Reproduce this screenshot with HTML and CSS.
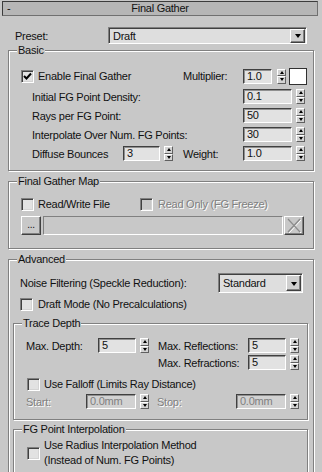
FILE: index.html
```html
<!DOCTYPE html>
<html lang="en">
<head>
    <meta charset="UTF-8">
    <title>Final Gather</title>
    <link rel="stylesheet" href="styles.css">
</head>
<body>

    <div class="rollout">
        <div class="title">
            <span class="minus">-</span>
            <span class="title-text">Final Gather</span>
        </div>

        <div class="row preset-row">
            <span class="preset-lbl">Preset:</span>
            <div class="dropdown preset-dd">
                <span class="dd-text">Draft</span>
                <span class="dd-btn"></span>
            </div>
        </div>

        <!-- Basic -->
        <div class="group basic">
            <span class="legend">Basic</span>
            <div class="row row-enable">
                <span class="check checked"><svg width="9" height="9" viewBox="0 0 9 9"><path d="M1 4 L3.5 6.5 L8 1.5" fill="none" stroke="#000" stroke-width="2"/></svg></span>
                <span class="lbl enable-lbl">Enable Final Gather</span>
                <span class="lbl mult-lbl">Multiplier:</span>
                <span class="field w29">1.0</span>
                <span class="spin"><i class="up"></i><i class="down"></i></span>
                <span class="swatch"></span>
            </div>
            <div class="row row-basic">
                <span class="lbl long-lbl">Initial FG Point Density:</span>
                <span class="field w49">0.1</span>
                <span class="spin"><i class="up"></i><i class="down"></i></span>
            </div>
            <div class="row row-basic">
                <span class="lbl long-lbl">Rays per FG Point:</span>
                <span class="field w49">50</span>
                <span class="spin"><i class="up"></i><i class="down"></i></span>
            </div>
            <div class="row row-basic">
                <span class="lbl long-lbl">Interpolate Over Num. FG Points:</span>
                <span class="field w49">30</span>
                <span class="spin"><i class="up"></i><i class="down"></i></span>
            </div>
            <div class="row row-basic">
                <span class="lbl bounce-lbl">Diffuse Bounces</span>
                <span class="field w37">3</span>
                <span class="spin"><i class="up"></i><i class="down"></i></span>
                <span class="lbl weight-lbl">Weight:</span>
                <span class="field w49">1.0</span>
                <span class="spin"><i class="up"></i><i class="down"></i></span>
            </div>
        </div>

        <!-- Final Gather Map -->
        <div class="group fgmap">
            <span class="legend">Final Gather Map</span>
            <div class="row row-files">
                <span class="check"></span>
                <span class="lbl rw-lbl">Read/Write File</span>
                <span class="check disabled"></span>
                <span class="lbl disabled-text ro-lbl">Read Only (FG Freeze)</span>
            </div>
            <div class="row row-path">
                <span class="button dots">...</span>
                <span class="path-field"></span>
                <span class="button clear">
                    <svg width="18" height="17" viewBox="0 0 18 17">
                        <path d="M3 2 L15 15 M15 2 L3 15" stroke="#fff" stroke-width="1" transform="translate(1 1)"/>
                        <path d="M3 2 L15 15 M15 2 L3 15" stroke="#8a8a8a" stroke-width="1.2"/>
                    </svg>
                </span>
            </div>
        </div>

        <!-- Advanced -->
        <div class="group advanced">
            <span class="legend">Advanced</span>
            <div class="row row-noise">
                <span class="lbl noise-lbl">Noise Filtering (Speckle Reduction):</span>
                <div class="dropdown noise-dd">
                    <span class="dd-text">Standard</span>
                    <span class="dd-btn"></span>
                </div>
            </div>
            <div class="row row-draft">
                <span class="check"></span>
                <span class="lbl draft-lbl">Draft Mode (No Precalculations)</span>
            </div>

            <div class="group inner trace">
                <span class="legend">Trace Depth</span>
                <div class="row row-trace">
                    <span class="lbl depth-lbl">Max. Depth:</span>
                    <span class="field w38">5</span>
                    <span class="spin"><i class="up"></i><i class="down"></i></span>
                    <span class="lbl refl-lbl">Max. Reflections:</span>
                    <span class="field w38">5</span>
                    <span class="spin"><i class="up"></i><i class="down"></i></span>
                </div>
                <div class="row row-trace">
                    <span class="lbl refr-lbl">Max. Refractions:</span>
                    <span class="field w38">5</span>
                    <span class="spin"><i class="up"></i><i class="down"></i></span>
                </div>
                <div class="row row-falloff">
                    <span class="check"></span>
                    <span class="lbl">Use Falloff (Limits Ray Distance)</span>
                </div>
                <div class="row row-trace">
                    <span class="lbl disabled-text start-lbl">Start:</span>
                    <span class="field w50 off">0.0mm</span>
                    <span class="spin"><i class="up"></i><i class="down"></i></span>
                    <span class="lbl disabled-text stop-lbl">Stop:</span>
                    <span class="field w50 off">0.0mm</span>
                    <span class="spin"><i class="up"></i><i class="down"></i></span>
                </div>
            </div>

            <div class="group inner interp">
                <span class="legend">FG Point Interpolation</span>
                <div class="row row-radius">
                    <span class="check"></span>
                    <span class="lbl radius-lbl">Use Radius Interpolation Method<br>(Instead of Num. FG Points)</span>
                </div>
            </div>
        </div>
    </div>

</body>
</html>
```

FILE: styles.css
```css
html, body {
    margin: 0;
    height: 472px;
    overflow: hidden;
}

body {
    background-color: #c8c8c8;
    font-family: "Liberation Sans", Arial, sans-serif;
    font-size: 11px;
    letter-spacing: -0.25px;
    color: #111111;
}

.rollout {
    width: 322px;
    padding-top: 1px;
}

.title {
    height: 13px;
    margin: 0 4px 0 2px;
    border: 1px solid #3c3c3c;
    border-right-color: #707070;
    border-bottom-color: #707070;
    background-color: #b6b6b6;
    display: flex;
    align-items: center;
    line-height: 13px;
}

.minus {
    width: 14px;
    padding-left: 4px;
}

.title-text {
    flex: 1;
    text-align: center;
    margin-right: 18px;
}

.row {
    display: flex;
    align-items: center;
}

.lbl {
    white-space: nowrap;
}

/* preset */
.preset-row {
    margin-top: 11px;
    height: 17px;
    padding-left: 15px;
}

.preset-lbl {
    width: 93px;
}

.dropdown {
    box-sizing: border-box;
    display: flex;
    align-items: center;
    border: 1px solid;
    border-color: #808080 #ffffff #ffffff #808080;
    box-shadow: inset 1px 1px 0 #404040;
    background-color: #dedede;
    padding-left: 4px;
}

.preset-dd {
    width: 199px;
    height: 17px;
}

.noise-dd {
    width: 85px;
    height: 20px;
}

.dd-text {
    flex: 1;
}

.dd-btn {
    box-sizing: border-box;
    width: 15px;
    height: 14px;
    margin-right: 1px;
    border: 1px solid;
    border-color: #ffffff #404040 #404040 #ffffff;
    box-shadow: inset -1px -1px 0 #808080;
    background-color: #d0d0d0;
    display: flex;
    align-items: center;
    justify-content: center;
}

.noise-dd .dd-btn {
    height: 16px;
}

.dd-btn::after {
    content: "";
    border-left: 3px solid transparent;
    border-right: 3px solid transparent;
    border-top: 4px solid #000000;
    margin-top: 1px;
}

/* group boxes */
.group {
    margin: 0 8px;
    border: 1px solid #808080;
    box-shadow: inset 1px 1px 0 #ffffff, 1px 1px 0 #ffffff;
}

.legend {
    display: block;
    width: fit-content;
    height: 13px;
    line-height: 13px;
    margin: -7px 0 0 8px;
    padding: 0 1px;
    background-color: #c8c8c8;
}

.basic {
    margin-top: 6px;
    padding-bottom: 7px;
}

.fgmap {
    margin-top: 10px;
    padding-bottom: 13px;
}

.advanced {
    margin-top: 10px;
    padding-bottom: 30px;
}

.inner {
    margin: 0 5px 0 4px;
}

.trace {
    margin-top: 10px;
    padding-bottom: 9px;
}

.interp {
    margin-top: 9px;
    padding-bottom: 30px;
}

/* basic rows */
.row-enable {
    margin-top: 8px;
    height: 22px;
    padding-left: 12px;
}

.enable-lbl {
    width: 145px;
    margin-left: 4px;
}

.mult-lbl {
    width: 60px;
}

.row-basic {
    height: 19px;
    padding-left: 23px;
}

.long-lbl {
    width: 211px;
}

.bounce-lbl {
    width: 91px;
}

.weight-lbl {
    width: 60px;
    margin-left: 10px;
}

/* inputs */
.field {
    box-sizing: border-box;
    height: 15px;
    border: 1px solid;
    border-color: #404040 #ffffff #ffffff #404040;
    box-shadow: inset 1px 1px 0 #909090;
    background-color: #e2e2e2;
    padding-left: 3px;
    display: flex;
    align-items: center;
    line-height: 13px;
}

.field.off {
    color: #808080;
    background-color: #d2d2d2;
}

.w29 { width: 29px; }
.w37 { width: 37px; }
.w38 { width: 38px; }
.w49 { width: 49px; }
.w50 { width: 50px; }

.spin {
    width: 9px;
    height: 15px;
    margin-left: 4px;
    display: flex;
    flex-direction: column;
}

.w29 + .spin {
    margin-left: 5px;
}

.spin i {
    box-sizing: border-box;
    flex: 1;
    border: 1px solid;
    border-color: #ffffff #606060 #606060 #ffffff;
    background-color: #d4d4d4;
    display: flex;
    align-items: center;
    justify-content: center;
}

.spin .up::after {
    content: "";
    border-left: 2px solid transparent;
    border-right: 2px solid transparent;
    border-bottom: 3px solid #000000;
}

.spin .down::after {
    content: "";
    border-left: 2px solid transparent;
    border-right: 2px solid transparent;
    border-top: 3px solid #000000;
}

.swatch {
    box-sizing: border-box;
    width: 18px;
    height: 17px;
    margin-left: 3px;
    border: 1px solid #303030;
    background-color: #ffffff;
}

.check {
    box-sizing: border-box;
    width: 13px;
    height: 13px;
    flex: none;
    border: 1px solid;
    border-color: #808080 #ffffff #ffffff #808080;
    box-shadow: inset 1px 1px 0 #404040, inset -1px -1px 0 #d4d4d4;
    background-color: #e2e2e2;
    display: flex;
    align-items: center;
    justify-content: center;
}

.check.disabled {
    background-color: #c8c8c8;
}

.disabled-text {
    color: #808080;
    text-shadow: 1px 1px 0 #ffffff;
}

/* final gather map */
.row-files {
    margin-top: 7px;
    height: 18px;
    padding-left: 12px;
}

.rw-lbl {
    width: 102px;
    margin-left: 4px;
}

.ro-lbl {
    margin-left: 5px;
}

.row-path {
    margin-top: 3px;
    height: 19px;
    padding-left: 12px;
}

.button {
    box-sizing: border-box;
    width: 20px;
    height: 19px;
    border: 1px solid;
    border-color: #ffffff #404040 #404040 #ffffff;
    box-shadow: inset -1px -1px 0 #808080;
    background-color: #c8c8c8;
    display: flex;
    align-items: center;
    justify-content: center;
}

.dots {
    font-size: 10px;
    line-height: 10px;
    padding-bottom: 2px;
}

.clear {
    margin-left: 1px;
}

.path-field {
    box-sizing: border-box;
    width: 240px;
    height: 19px;
    margin-left: 2px;
    border: 1px solid;
    border-color: #808080 #ffffff #ffffff #808080;
    background-color: #c8c8c8;
}

/* advanced */
.row-noise {
    margin-top: 7px;
    height: 20px;
    padding-left: 11px;
}

.noise-lbl {
    width: 198px;
}

.row-draft {
    margin-top: 2px;
    height: 18px;
    padding-left: 11px;
}

.draft-lbl {
    margin-left: 5px;
}

.row-trace {
    height: 17px;
    padding-left: 12px;
}

.trace .legend + .row-trace {
    margin-top: 7px;
}

.depth-lbl {
    width: 72px;
}

.refl-lbl {
    width: 90px;
    margin-left: 9px;
}

.refr-lbl {
    width: 90px;
    margin-left: 132px;
}

.row-falloff {
    margin-top: 4px;
    height: 18px;
    padding-left: 13px;
}

.row-falloff .lbl {
    margin-left: 4px;
}

.start-lbl {
    width: 60px;
}

.stop-lbl {
    width: 79px;
    margin-left: 8px;
}

.row-radius {
    margin-top: 2px;
    height: 30px;
    padding-left: 13px;
}

.radius-lbl {
    margin-left: 4px;
    line-height: 15px;
}
```
